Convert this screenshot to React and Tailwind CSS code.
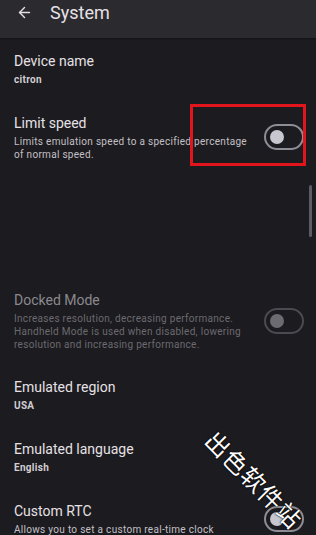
import React from 'react';
import { ArrowLeft } from 'lucide-react';

function Toggle({ dim }) {
  return (
    <div
      className={`w-[40px] h-[26px] rounded-full border-2 flex items-center pl-[4px] shrink-0 ${
        dim ? 'border-[#4b4a50]' : 'border-[#8e8c94]'
      }`}
    >
      <div className={`w-[14px] h-[14px] rounded-full ${dim ? 'bg-[#6c6b71]' : 'bg-[#c8c6ce]'}`} />
    </div>
  );
}

function ValueItem({ title, value }) {
  return (
    <div className="px-[14px] py-[13px]">
      <div className="text-[14px] leading-[20px] text-[#e6e1e6]">{title}</div>
      <div className="mt-[2px] text-[10px] leading-[14px] font-bold text-[#d2ced3] tracking-[0.3px]">{value}</div>
    </div>
  );
}

function SwitchItem({ title, lines, dim, bottom = 'pb-[13px]' }) {
  return (
    <div className={`pl-[14px] pr-[12px] pt-[13px] ${bottom} flex items-center`}>
      <div className="flex-1">
        <div className={`text-[14px] leading-[20px] ${dim ? 'text-[#8b898f]' : 'text-[#e6e1e6]'}`}>{title}</div>
        <div
          className={`mt-[2px] text-[10px] leading-[13px] tracking-[0.3px] ${dim ? 'text-[#6b6a70]' : 'text-[#c4c0c6]'}`}
        >
          {lines.map((l) => (
            <div key={l} className="whitespace-nowrap">{l}</div>
          ))}
        </div>
      </div>
      <Toggle dim={dim} />
    </div>
  );
}

export default function App() {
  return (
    <div
      className="relative w-[316px] h-[535px] overflow-hidden bg-[#1c1b1f]"
      style={{ fontFamily: 'Roboto, "Noto Sans", sans-serif' }}
    >
      <div className="h-[38px] bg-[#2b2a2e] flex items-start shadow-[0_1px_2px_rgba(0,0,0,0.4)]">
        <div className="h-[24px] flex items-center pl-[16px] gap-[17px]">
          <ArrowLeft size={17} strokeWidth={2} className="text-[#e2dfe4]" />
          <span className="text-[18px] text-[#e6e1e6]">System</span>
        </div>
      </div>

      <ValueItem title="Device name" value="citron" />
      <SwitchItem
        title="Limit speed"
        lines={['Limits emulation speed to a specified percentage', 'of normal speed.']}
      />
      <div className="h-[103px]" />
      <SwitchItem
        dim
        title="Docked Mode"
        lines={[
          'Increases resolution, decreasing performance.',
          'Handheld Mode is used when disabled, lowering',
          'resolution and increasing performance.',
        ]}
      />
      <ValueItem title="Emulated region" value="USA" />
      <ValueItem title="Emulated language" value="English" />
      <SwitchItem
        title="Custom RTC"
        lines={['Allows you to set a custom real-time clock']}
        bottom="pb-[24px]"
      />

      {/* scrollbar */}
      <div className="absolute left-[309px] top-[185px] w-[3px] h-[52px] rounded-full bg-[#5d5c62]" />

      {/* red highlight box */}
      <div className="absolute left-[190px] top-[104px] w-[116px] h-[62px] border-[3px] border-[#e3151c]" />

      {/* watermark */}
      <div
        className="absolute left-[192px] top-[465px] w-[124px] text-center rotate-45 text-[24px] leading-[28px] text-white whitespace-nowrap tracking-[1px]"
        style={{
          fontFamily: '"Noto Sans CJK SC", sans-serif',
          textShadow: '0 0 2px #000, 0 0 1px #000',
        }}
      >
        出色软件站
      </div>
    </div>
  );
}
